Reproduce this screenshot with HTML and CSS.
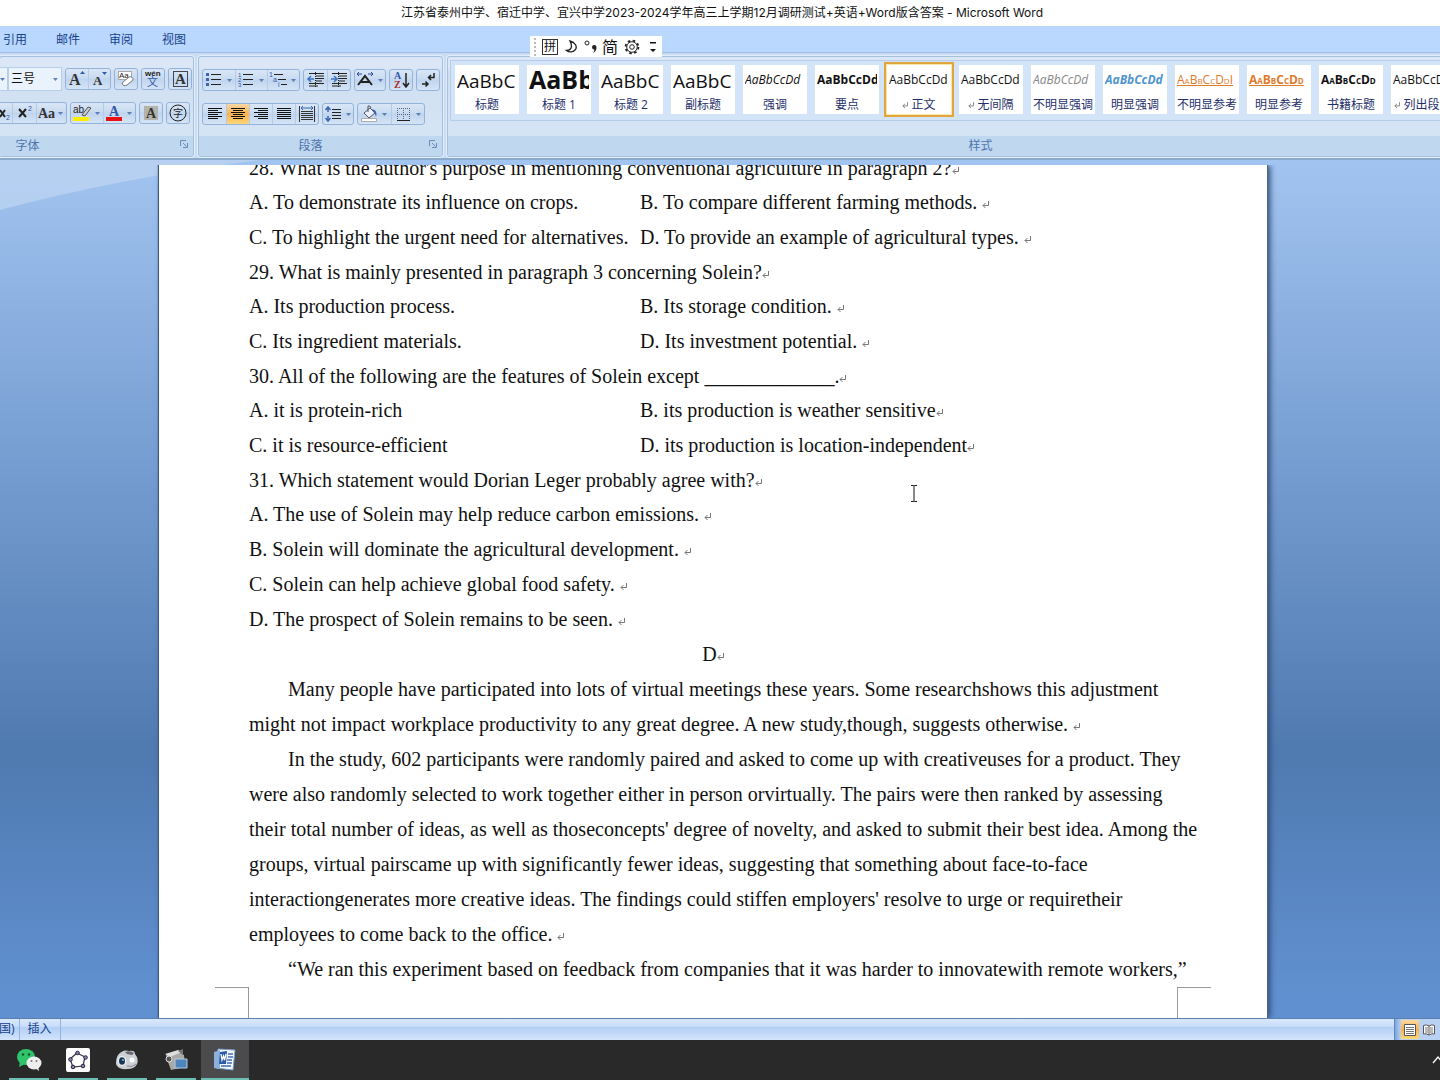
FILE: index.html
```html
<!DOCTYPE html>
<html lang="zh-CN">
<head>
<meta charset="utf-8">
<title>Microsoft Word</title>
<link rel="stylesheet" href="styles.css">
</head>
<body>
<svg class="defs" aria-hidden="true">
  <defs>
    <symbol id="ret" viewBox="0 0 7 8"><path d="M6.500 0V4.500H1M3.500 2L1 4.500L3.500 7" fill="none" stroke="#777"/></symbol>
    <symbol id="caret" viewBox="0 0 5 3"><path d="M0 0H5L2.500 3Z" fill="#5a7fb5"/></symbol>
    <symbol id="launch" viewBox="0 0 8 8"><path d="M.5 6V.5H6M7.500 3V7.500H3M3 3L6.500 6.500" fill="none" stroke="#6a8db8"/></symbol>
  </defs>
</svg>
<div class="window">
  <header class="titlebar">江苏省泰州中学、宿迁中学、宜兴中学2023-2024学年高三上学期12月调研测试+英语+Word版含答案 - Microsoft Word</header>
  <nav class="tabs">
    <a href="#ref">引用</a><a href="#mail">邮件</a><a href="#review">审阅</a><a href="#view">视图</a>
    <div class="ime">
      <i class="grip"></i>
      <span class="pin">拼</span>
      <svg width="14" height="16" viewBox="0 0 14 16"><path d="M6 2C11 3 14 8 11 11C9 13.500 5 13.500 2.500 11.500C7 11.500 9 8 6 2Z" fill="none" stroke="#222" stroke-width="1.300"/></svg>
      <svg width="14" height="16" viewBox="0 0 14 16"><circle cx="3" cy="4" r="2" fill="none" stroke="#222"/><path d="M8 8a2.200 2.200 0 1 1 4.500 .5Q12.500 12 9 14Q10.500 12 10.300 10.500Q8 10.500 8 8Z" fill="#222"/></svg>
      <span class="jian">简</span>
      <svg width="16" height="16" viewBox="0 0 16 16" fill="none" stroke="#222"><circle cx="8" cy="8" r="2.300"/><circle cx="8" cy="8" r="5.300"/><circle cx="8" cy="8" r="6.400" stroke-width="1.800" stroke-dasharray="2.500 2.520"/></svg>
      <svg class="more" width="6" height="12" viewBox="0 0 6 12"><path d="M0 1H6V2.500H0ZM0 8H6L3 11Z" fill="#111"/></svg>
    </div>
  </nav>
  <section class="ribbon">
    <div class="group font">
      <div class="rows">
        <div class="row">
          <span class="combo stub"><svg class="car"><use href="#caret"/></svg></span>
          <label class="combo size"><select aria-label="字号"><option>三号</option></select><svg class="car"><use href="#caret"/></svg></label>
          <div class="set"><button class="b22" aria-label="增大字体"><svg width="20" height="20"><text x="2" y="16" class="sf" font-size="16">A</text><path d="M13 5L15.500 2L18 5Z" fill="#2f5da8"/></svg></button><button class="b22" aria-label="缩小字体"><svg width="20" height="20"><text x="3" y="16" class="sf" font-size="13">A</text><path d="M12 3H17L14.500 6Z" fill="#2f5da8"/></svg></button></div>
          <div class="set"><button class="b22" aria-label="清除格式"><svg width="20" height="20"><rect x="2.500" y="2.500" width="13" height="8" fill="#fff" stroke="#aaa"/><text x="3" y="9" font-size="8" class="sn">Aa</text><path d="M6 14L13 8Q17 7 17 11L11 16Q7 18 6 14Z" fill="#fff" stroke="#777"/></svg></button></div>
          <div class="set"><button class="b22" aria-label="拼音指南"><svg width="20" height="20"><text x="2" y="7" font-size="8" class="sn" font-weight="bold">wén</text><text x="4" y="17" font-size="11" class="sn blue">文</text></svg></button></div>
          <div class="set"><button class="b22" aria-label="字符边框"><svg width="20" height="20"><rect x="3.500" y="2.500" width="14" height="15" fill="none" stroke="#445"/><text x="5" y="15" class="sf" font-size="15">A</text></svg></button></div>
        </div>
        <div class="row">
          <div class="set open"><button class="b12" aria-label="下标"><svg width="12" height="20"><path d="M0 7L5 14M5 7L0 14" stroke="#222" stroke-width="2"/><text x="6" y="17" class="sn blue" font-size="7">2</text></svg></button><button class="b24" aria-label="上标"><svg width="22" height="20"><path d="M5 6L12 14M12 6L5 14" stroke="#222" stroke-width="2"/><text x="14" y="8" class="sn blue" font-size="7">2</text></svg></button><button class="b30" aria-label="更改大小写"><svg width="17" height="20"><text x="0" y="15" class="sf" font-size="14">Aa</text></svg><svg class="car"><use href="#caret"/></svg></button></div>
          <div class="set"><button class="b32" aria-label="突出显示"><svg width="20" height="20"><text x="1" y="10" class="sn" font-size="10">ab</text><path d="M10 12L16 4L19 5L13 13Z" fill="#ccc" stroke="#555"/><path d="M1 14H17V18H1Z" fill="#ffec00"/></svg><svg class="car"><use href="#caret"/></svg></button><button class="b32" aria-label="字体颜色"><svg width="20" height="20"><text x="5" y="13" font-size="14" class="sf blue">A</text><path d="M2 14H18V18H2Z" fill="#e81010"/></svg><svg class="car"><use href="#caret"/></svg></button></div>
          <div class="set"><button class="b22" aria-label="字符底纹"><svg width="20" height="20"><path d="M3 3H17V17H3Z" fill="#b3b3ac"/><text x="5" y="15" class="sf" font-size="14">A</text></svg></button></div>
          <div class="set"><button class="b22" aria-label="带圈字符"><svg width="20" height="20"><circle cx="10" cy="10" r="8" fill="none" stroke="#222"/><text x="5" y="14" font-size="10" class="sn">字</text></svg></button></div>
        </div>
      </div>
      <footer><span>字体</span><svg class="launch"><use href="#launch"/></svg></footer>
    </div>
    <div class="group para">
      <div class="rows">
        <div class="row">
          <div class="set"><button class="b32" aria-label="项目符号"><svg width="20" height="20"><path d="M7 4.500H17M7 9.500H17M7 14.500H17" stroke="#222"/><path d="M2 3h3v3H2zM2 8h3v3H2zM2 13h3v3H2z" fill="#3c64b0"/></svg><svg class="car"><use href="#caret"/></svg></button><button class="b32" aria-label="编号"><svg width="20" height="20"><path d="M7 4.500H17M7 9.500H17M7 14.500H17" stroke="#222"/><g class="sn blue" font-size="6"><text x="2" y="7">1</text><text x="2" y="12">2</text><text x="2" y="17">3</text></g></svg><svg class="car"><use href="#caret"/></svg></button><button class="b32" aria-label="多级列表"><svg width="20" height="20"><path d="M6 4.500H15M10 9.500H18M13 14.500H19" stroke="#222"/><g class="sn blue" font-size="7"><text x="1" y="7">1</text><text x="5" y="12">a</text><text x="10" y="17">i</text></g></svg><svg class="car"><use href="#caret"/></svg></button></div>
          <div class="set"><button class="b23" aria-label="减少缩进"><svg width="20" height="20"><path d="M3 3.500H18M10 6H18M10 8.500H18M10 11H16M3 13.500H18M3 16H12" stroke="#222"/><path d="M9.500 2V18" stroke="#222" stroke-dasharray="1 1"/><path d="M8 9H2M5 6L2 9L5 12" fill="none" stroke="#3c74c0" stroke-width="1.500"/></svg></button><button class="b23" aria-label="增加缩进"><svg width="20" height="20"><path d="M3 3.500H18M10 6H18M10 8.500H18M10 11H16M3 13.500H18M3 16H12" stroke="#222"/><path d="M9.500 2V18" stroke="#222" stroke-dasharray="1 1"/><path d="M2 9H8M5 6L8 9L5 12" fill="none" stroke="#3c74c0" stroke-width="1.500"/></svg></button></div>
          <div class="set"><button class="b30" aria-label="中文版式"><svg width="20" height="20"><path d="M3 15L10 6L17 15M6 12H14" fill="none" stroke="#222" stroke-width="2"/><path d="M2 4H7M4 2L2 4L4 6M18 4H13M16 2L18 4L16 6" fill="none" stroke="#2848a0"/></svg><svg class="car"><use href="#caret"/></svg></button></div>
          <div class="set"><button class="b22" aria-label="排序"><svg width="20" height="20"><text x="3" y="9" class="sf blue" font-size="10">A</text><text x="3" y="18" class="sf red" font-size="10">Z</text><path d="M15 3V17M12 13L15 17L18 13" fill="none" stroke="#222" stroke-width="1.500"/></svg></button></div>
          <div class="set"><button class="b22" aria-label="显示编辑标记"><svg width="20" height="20"><path d="M16 3V7.500H11M13 5L10.500 7.500L13 10M4 14H10M7.500 11.500L10 14L7.500 16.500" fill="none" stroke="#222" stroke-width="1.500"/></svg></button></div>
        </div>
        <div class="row">
          <div class="set"><button class="b23" aria-label="左对齐"><svg width="20" height="20"><path d="M3 4.500H17M3 6.500H13M3 8.500H17M3 10.500H13M3 12.500H17M3 14.500H13" stroke="#111"/></svg></button><button class="b23 on" aria-label="居中"><svg width="20" height="20"><path d="M3 4.500H17M5 6.500H15M3 8.500H17M5 10.500H15M3 12.500H17M5 14.500H15" stroke="#111"/></svg></button><button class="b23" aria-label="右对齐"><svg width="20" height="20"><path d="M3 4.500H17M7 6.500H17M3 8.500H17M7 10.500H17M3 12.500H17M7 14.500H17" stroke="#111"/></svg></button><button class="b23" aria-label="两端对齐"><svg width="20" height="20"><path d="M3 4.500H17M3 6.500H17M3 8.500H17M3 10.500H17M3 12.500H17M3 14.500H17" stroke="#111"/></svg></button><button class="b23" aria-label="分散对齐"><svg width="20" height="20"><path d="M4 7.500H16M4 9.500H16M4 11.500H16M4 13.500H16M4 15.500H16M2.500 2V18M17.500 2V18" stroke="#333"/><path d="M4 4H16M6 2L4 4L6 6M14 2L16 4L14 6" fill="none" stroke="#3c64b0"/></svg></button></div>
          <div class="set"><button class="b30" aria-label="行距"><svg width="20" height="20"><path d="M9 5.500H18M9 8.500H18M9 11.500H18M9 14.500H18" stroke="#222"/><path d="M5 3V8M5 12V17M2.500 6L5 3L7.500 6M2.500 14L5 17L7.500 14" fill="none" stroke="#3c64b0" stroke-width="1.500"/></svg><svg class="car"><use href="#caret"/></svg></button></div>
          <div class="set"><button class="b33" aria-label="底纹"><svg width="20" height="20"><path d="M5 9L11 4L16 9L10 14Z" fill="#eef" stroke="#556"/><path d="M9 8V2Q11 1 12 4" fill="none" stroke="#456"/><path d="M13 5Q19 6 17 13Q16 9 15 9Z" fill="#3c64b0"/><path d="M2.500 14.500H17.500V17.500H2.500Z" fill="#fff" stroke="#aaa"/></svg><svg class="car"><use href="#caret"/></svg></button><button class="b33" aria-label="边框"><svg width="20" height="20"><path d="M4 4.500H17M4 10.500H17M4.500 4V16M10.500 4V16M16.500 4V16" stroke="#567" stroke-dasharray="1 1"/><path d="M4 16.500H17" stroke="#222"/></svg><svg class="car"><use href="#caret"/></svg></button></div>
        </div>
      </div>
      <footer><span>段落</span><svg class="launch"><use href="#launch"/></svg></footer>
    </div>
    <div class="group styles">
      <div class="rows"><div class="gallery">
        <button class="style"><b class="s-lg">AaBbC</b><span>标题</span></button>
        <button class="style"><b class="s-xl">AaBb</b><span>标题 1</span></button>
        <button class="style"><b class="s-lg">AaBbC</b><span>标题 2</span></button>
        <button class="style"><b class="s-lg">AaBbC</b><span>副标题</span></button>
        <button class="style"><b class="it">AaBbCcDd</b><span>强调</span></button>
        <button class="style"><b class="bd">AaBbCcDd</b><span>要点</span></button>
        <button class="style sel"><b>AaBbCcDd</b><span><svg class="ret"><use href="#ret"/></svg> 正文</span></button>
        <button class="style"><b>AaBbCcDd</b><span><svg class="ret"><use href="#ret"/></svg> 无间隔</span></button>
        <button class="style"><b class="it grey">AaBbCcDd</b><span>不明显强调</span></button>
        <button class="style"><b class="it bd sky">AaBbCcDd</b><span>明显强调</span></button>
        <button class="style"><b class="caps orange">AaBbCcDdI</b><span>不明显参考</span></button>
        <button class="style"><b class="caps bd orange">AaBbCcDd</b><span>明显参考</span></button>
        <button class="style"><b class="caps bd">AaBbCcDd</b><span>书籍标题</span></button>
        <button class="style"><b>AaBbCcDd</b><span><svg class="ret"><use href="#ret"/></svg> 列出段落</span></button>
      </div></div>
      <footer><span>样式</span></footer>
    </div>
  </section>
  <main class="workspace">
    <svg class="swoosh" viewBox="0 0 260 52" aria-hidden="true"><path d="M0 0H260Q120 18 0 50Z" fill="#bdd4f3" opacity=".75"/></svg>
    <article class="page">
      <h3>28. What is the author's purpose in mentioning conventional agriculture in paragraph 2?<svg class="ret"><use href="#ret"/></svg></h3>
      <div class="opts"><p>A. To demonstrate its influence on crops.</p><p>B. To compare different farming methods. <svg class="ret"><use href="#ret"/></svg></p>
      <p>C. To highlight the urgent need for alternatives.</p><p>D. To provide an example of agricultural types. <svg class="ret"><use href="#ret"/></svg></p></div>
      <h3>29. What is mainly presented in paragraph 3 concerning Solein?<svg class="ret"><use href="#ret"/></svg></h3>
      <div class="opts"><p>A. Its production process.</p><p>B. Its storage condition. <svg class="ret"><use href="#ret"/></svg></p>
      <p>C. Its ingredient materials.</p><p>D. Its investment potential. <svg class="ret"><use href="#ret"/></svg></p></div>
      <h3>30. All of the following are the features of Solein except _____________.<svg class="ret"><use href="#ret"/></svg></h3>
      <div class="opts"><p>A. it is protein-rich</p><p>B. its production is weather sensitive<svg class="ret"><use href="#ret"/></svg></p>
      <p>C. it is resource-efficient</p><p>D. its production is location-independent<svg class="ret"><use href="#ret"/></svg></p></div>
      <h3>31. Which statement would Dorian Leger probably agree with?<svg class="ret"><use href="#ret"/></svg></h3>
      <p>A. The use of Solein may help reduce carbon emissions. <svg class="ret"><use href="#ret"/></svg></p>
      <p>B. Solein will dominate the agricultural development. <svg class="ret"><use href="#ret"/></svg></p>
      <p>C. Solein can help achieve global food safety. <svg class="ret"><use href="#ret"/></svg></p>
      <p>D. The prospect of Solein remains to be seen. <svg class="ret"><use href="#ret"/></svg></p>
      <p class="mid">D<svg class="ret"><use href="#ret"/></svg></p>
      <p class="ind">Many people have participated into lots of virtual meetings these years. Some researchshows this adjustment<br>might not impact workplace productivity to any great degree. A new study,though, suggests otherwise. <svg class="ret"><use href="#ret"/></svg></p>
      <p class="ind">In the study, 602 participants were randomly paired and asked to come up with creativeuses for a product. They<br>were also randomly selected to work together either in person orvirtually. The pairs were then ranked by assessing<br>their total number of ideas, as well as thoseconcepts' degree of novelty, and asked to submit their best idea. Among the<br>groups, virtual pairscame up with significantly fewer ideas, suggesting that something about face-to-face<br>interactiongenerates more creative ideas. The findings could stiffen employers' resolve to urge or requiretheir<br>employees to come back to the office. <svg class="ret"><use href="#ret"/></svg></p>
      <p class="ind">“We ran this experiment based on feedback from companies that it was harder to innovatewith remote workers,”</p>
      <div class="crops"><i></i><i></i></div>
    </article>
    <svg class="cursor" width="8" height="17" viewBox="0 0 8 17"><path d="M1 .5H3.500L4 1L4.500 .5H7M4 1V16M1 16.500H3.500L4 16L4.500 16.500H7" fill="none" stroke="#111"/></svg>
  </main>
  <div class="status">
    <span>国)</span><span>插入</span>
    <div class="views"><button class="on" aria-label="页面视图"><svg width="12" height="12" viewBox="0 0 12 12"><path d="M.5 .5H11.500V11.500H.5Z" fill="#fff" stroke="#555"/><path d="M2 3.500H10M2 5.500H10M2 7.500H10M2 9.500H10" stroke="#777"/></svg></button><button aria-label="阅读版式"><svg width="12" height="12" viewBox="0 0 12 12"><path d="M6 2Q3 0 .5 1.500V10Q3 9 6 11Q9 9 11.500 10V1.500Q9 0 6 2ZM6 2V11" fill="#fff" stroke="#555"/><path d="M2 4H5M2 6H5M2 8H5M7 4H10M7 6H10M7 8H10" stroke="#777"/></svg></button><button aria-label="Web版式"><svg width="12" height="12" viewBox="0 0 12 12"><path d="M.5 .5H11.500V11.500H.5Z" fill="#fff" stroke="#555"/></svg></button></div>
  </div>
  <footer class="taskbar">
    <button aria-label="微信"><svg width="26" height="24" viewBox="0 0 26 24"><ellipse cx="10" cy="9" rx="9" ry="8" fill="#2fc46a"/><path d="M4 14L3 19L9 16Z" fill="#2fc46a"/><ellipse cx="18" cy="15" rx="7.500" ry="6.500" fill="#eee"/><path d="M19 20L23 23L22 18Z" fill="#eee"/><g fill="#15552e"><circle cx="7" cy="6.500" r="1.200"/><circle cx="13" cy="6.500" r="1.200"/></g><g fill="#777"><circle cx="15.500" cy="13" r="1"/><circle cx="20.500" cy="13" r="1"/></g></svg></button>
    <button aria-label="几何画板"><svg width="24" height="24" viewBox="0 0 24 24"><rect width="24" height="24" rx="2" fill="#fff"/><path d="M11 5L19 9L17 18L7 19L4 11Z" fill="none" stroke="#334" stroke-width="1.200"/><g fill="#88a" stroke="#224"><circle cx="11.500" cy="5" r="1.800"/><circle cx="19.500" cy="9.500" r="1.800"/><circle cx="17" cy="18" r="1.800"/><circle cx="7" cy="19" r="1.800"/><circle cx="4.500" cy="11.500" r="1.800"/></g></svg></button>
    <button aria-label="摄像头"><svg width="24" height="22" viewBox="0 0 24 22"><path d="M3 6Q8 0 14 2Q20 1 20 5Q24 10 22 15Q20 20 12 20Q3 21 1 15Q1 9 3 6Z" fill="#ccd0d2"/><path d="M10 3Q15 1 19 4L17 6L12 5Z" fill="#667"/><ellipse cx="7" cy="12" rx="4.500" ry="5" fill="#e8eef4"/><ellipse cx="7" cy="12" rx="3" ry="3.800" fill="#1a3552"/><circle cx="8" cy="11" r="1" fill="#8bd"/><circle cx="17" cy="11" r="2.500" fill="#fff"/><path d="M12 17Q17 19 21 15" stroke="#889" fill="none"/></svg></button>
    <button aria-label="录像机"><svg width="24" height="24" viewBox="0 0 24 24"><path d="M2 7L15 4L20 7L21 19L7 22L4 14Z" fill="#aaa9a4"/><path d="M1 6L14 2L18 4L6 9Z" fill="#ddd"/><circle cx="5" cy="11" r="3" fill="#555" stroke="#ddd"/><path d="M14 3L19 1V7Z" fill="#777"/><path d="M11 11H23V20H11Z" fill="#4f84bd" stroke="#b8cbe0"/></svg></button>
    <button class="active" aria-label="Word"><svg width="24" height="24" viewBox="0 0 24 24"><path d="M5 1L22 2L20 22L3 20Z" fill="#f4f8fc" stroke="#7a9cc8"/><path d="M1 4L7 2V21L1 20Z" fill="#8db1dc"/><path d="M7 4L14 3L13 16L6 16Z" fill="#2a5aa8"/><path d="M8 6L9 12L10.500 8L11.500 12L13 6" fill="none" stroke="#fff" stroke-width="1.300"/><path d="M15 6H20M15 9H20M14 12H19M14 15H19M8 18H18" stroke="#3f6db4" stroke-width="1.500"/></svg></button>
    <svg class="tray" width="8" height="8" viewBox="0 0 8 8"><path d="M1 7L6 1L11 7" fill="none" stroke="#fff" stroke-width="1.300"/></svg>
  </footer>
</div>
</body>
</html>
```
FILE: styles.css
```css
* { box-sizing: border-box; }
body { margin: 0; background: #292929; font: 12px/16px "Open Sans", "Noto Sans CJK SC", sans-serif; color: #15428b; }
button { border: 0; padding: 0; margin: 0; background: none; font: inherit; color: inherit; }
p, h3 { margin: 0; font-weight: normal; }
.defs { position: absolute; width: 0; height: 0; }
.window { min-height: 100vh; display: flex; flex-direction: column; overflow: hidden; }
.titlebar { height: 26px; font-family: Inter, "Noto Sans CJK SC", sans-serif; line-height: 26px; background: #fff; color: #111; text-align: center; white-space: nowrap; padding-left: 4px; }
.tabs { position: relative; height: 26px; background: #bad7fd; display: flex; gap: 29px; padding-left: 3px; line-height: 27px; }
.tabs a { color: #15428b; text-decoration: none; white-space: nowrap; }
.ime { position: absolute; z-index: 2; left: 530px; top: 10px; width: 132px; height: 21px; background: #fff; color: #111; display: flex; align-items: center; gap: 6px; padding-left: 4px; }
.grip { height: 18px; border-left: 2px dotted #bbb; }
.pin { width: 16px; height: 16px; border: 1px solid #333; font-size: 12px; line-height: 13px; text-align: center; }
.jian { font-size: 16px; line-height: 20px; margin-left: -2px; }
.more { margin-left: 4px; }

.ribbon { height: 108px; display: flex; gap: 4px; padding: 3px 0 1px; background: #c9dcf3; border-top: 1px solid #9dbde4; border-bottom: 2px solid #8aa9cd; overflow: hidden; }
.group { flex: none; display: flex; flex-direction: column; border: 1px solid #a5c0dd; border-radius: 3px; background: linear-gradient(#dbe7f6 0, #dbe7f6 10px, #cfdff1 16px, #d6e5f5 80px); overflow: hidden; box-shadow: 0 0 0 1px #e2eefb; }
.font { width: 195px; margin-left: -1px; }
.para { width: 245px; }
.styles { flex: 1; min-width: 0; margin-right: -320px; }
.rows { flex: 1; min-height: 0; }
.row { display: flex; gap: 3px; height: 22px; }
.font .rows { padding-top: 11px; }
.para .rows { padding: 12px 0 0 3px; }
.row + .row { margin-top: 12px; }
.set { display: flex; flex: none; border: 1px solid #94b3da; border-radius: 3px; background: linear-gradient(#d9e6f6, #c9dbf0 45%, #bfd4ee 50%, #d5e4f6); }
.set button + button { border-left: 1px solid #b4cae6; }
.open { border-left: 0; border-radius: 0 3px 3px 0; }
.set button { height: 20px; display: flex; align-items: center; justify-content: center; flex: none; overflow: hidden; }
.b12 { width: 12px; } .b22 { width: 22px; } .b23 { width: 23px; } .b24 { width: 24px; } .b30 { width: 30px; } .b32 { width: 32px; } .b33 { width: 33px; }
.set button svg { flex: none; }
.on { background: linear-gradient(#fbd9a3, #fbb04c 50%, #fdd878); }
.car { width: 5px; height: 3px; margin: 0 3px; }
.sf { font-family: "Liberation Serif", serif; font-weight: bold; fill: #333; }
.sn { font-family: "Liberation Sans", "Noto Sans CJK SC", sans-serif; fill: #222; }
.blue { fill: #3058a8; } .red { fill: #b02a2a; }
.combo { height: 24px; margin-top: -1px; background: #eaf2fb; border: 1px solid #b8cfea; display: flex; align-items: center; }
.stub { width: 8px; border-left: 0; margin-right: -3px; }
.stub .car { margin: 0; }
.size { width: 54px; }
.size select { appearance: none; border: 0; background: none; font: 12px/20px "Open Sans", "Noto Sans CJK SC", sans-serif; color: #111; width: 42px; padding: 0 0 0 2px; }
.font footer, .para footer, .styles footer { height: 20px; flex: none; display: flex; align-items: center; justify-content: center; background: #bfd7ef; color: #4d74ad; position: relative; }
.font footer span { margin-right: 138px; }
.para footer span { margin-right: 20px; }
.styles footer { padding-right: 246px; }
.launch { position: absolute; right: 5px; top: 4px; width: 8px; height: 8px; }

.gallery { display: flex; gap: 8px; margin: 3px 0 0 2px; padding: 4px; border: 1px solid #b5cdea; background: #d3e4f8; height: 61px; }
.style { flex: none; width: 64px; height: 49px; background: #fff; overflow: hidden; display: flex; flex-direction: column; align-items: center; white-space: nowrap; color: #1e2f6b; }
.style b { height: 32px; width: 60px; flex: none; overflow: hidden; text-align: left; font-size: 12px; line-height: 30px; font-weight: normal; color: #111; }
.style .s-lg { font-size: 19px; line-height: 32px; }
.style .s-xl { font-size: 25px; line-height: 28px; font-weight: bold; }
.style .it { font-style: italic; }
.style .bd { font-weight: bold; }
.style .grey { color: #888; }
.style .sky { color: #4f94cd; }
.style .caps { font-variant: small-caps; }
.style .orange { color: #e07b2c; text-decoration: underline; }
.style .ret { width: 6px; height: 7px; }
.sel { outline: 2px solid #e0a63c; outline-offset: 1px; box-shadow: 0 0 0 2px #fbe7a8; }

.workspace { position: relative; flex: 1; min-width: 0; padding: 5px 173px 0 159px; background: linear-gradient(#a2c4f0, #7098cd 40%, #4f7ab0 69%, #6190d0 97%); overflow: hidden; }
.swoosh { position: absolute; left: 0; top: 0; width: 260px; height: 52px; }
.page { position: relative; height: 853px; overflow: hidden; background: #fff; box-shadow: 1px 0 0 #4d6487, 3px 0 6px #2f4a75, -1px 0 1px #3c5a8a; clip-path: inset(0 -10px 0 -10px); padding: 0 90px; color: #111; font: 20px/35px "Liberation Serif", serif; white-space: nowrap; }
.page h3 { font-size: 20px; line-height: 34px; }
.page h3:first-child { margin-top: -14px; }
.page .ret { width: 7px; height: 8px; }
.opts { display: grid; grid-template-columns: 391px 1fr; }
.ind { text-indent: 39px; }
.mid { text-align: center; }
.crops { display: flex; justify-content: space-between; margin: 0 -34px; }
.crops i { width: 34px; height: 40px; border-top: 1px solid #999; border-right: 1px solid #999; }
.crops i + i { border-right: 0; border-left: 1px solid #999; }
.cursor { position: absolute; left: 910px; top: 325px; }

.status { height: 22px; display: flex; line-height: 20px; border-top: 1px solid #5b7fae; background: linear-gradient(#d9e8fb, #cadefa 35%, #b2cff5 40%, #d3e4fb); }
.status span { border-right: 1px solid #94b4de; padding-right: 4px; margin-left: -1px; }
.status span + span { padding: 0 8px; margin-left: 0; }
.views { margin-left: auto; display: flex; gap: 1px; width: 46px; padding: 1px 0 1px 6px; overflow: hidden; border-left: 1px solid #5f87bb; background: linear-gradient(90deg, #7ca6dd, #b9d2f4 6px); }
.views button { width: 18px; flex: none; display: grid; place-items: center; }
.taskbar { height: 40px; display: flex; align-items: center; gap: 1px; padding-left: 5px; background: #292929; }
.taskbar button { width: 48px; height: 40px; display: grid; place-items: center; background: linear-gradient(#6cc0b3, #6cc0b3) center bottom / 40px 2px no-repeat; }
.taskbar .active { background: #4b4b4d linear-gradient(#6cc0b3, #6cc0b3) center bottom / 48px 2px no-repeat; }
.tray { margin-left: auto; }
```
